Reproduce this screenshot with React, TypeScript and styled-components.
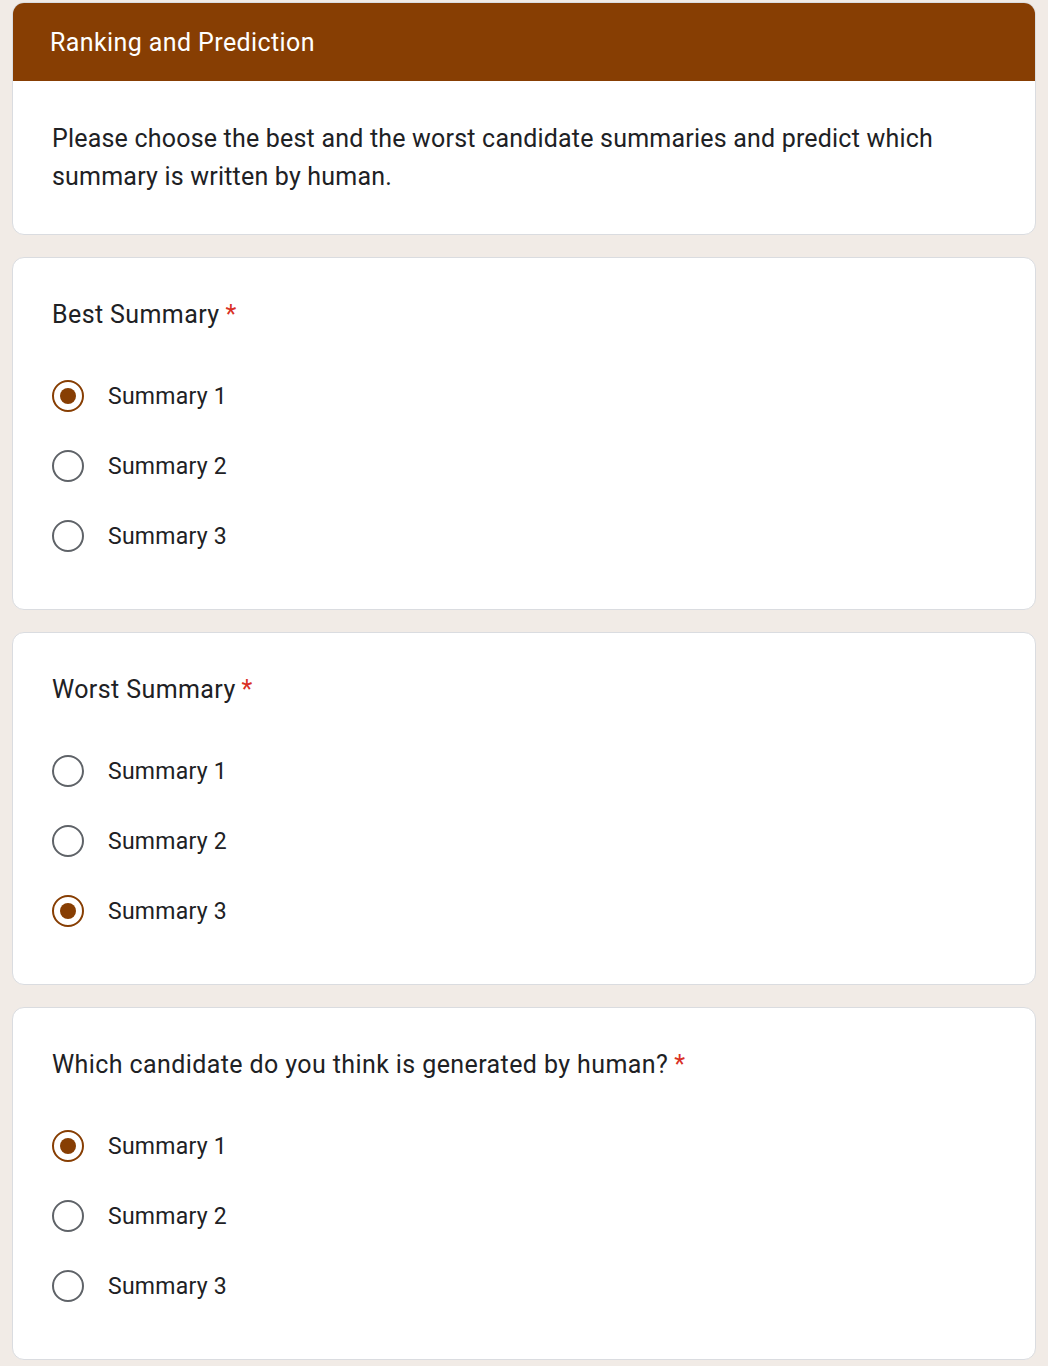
import React, { useState } from "react";
import styled, { createGlobalStyle } from "styled-components";

const GlobalStyle = createGlobalStyle`
  html, body {
    margin: 0;
    padding: 0;
    background: #f1ebe6;
    font-family: Roboto, "Liberation Sans", Arial, sans-serif;
  }
`;

const Page = styled.div`
  display: flex;
  flex-direction: column;
  gap: 22px;
  padding: 2px 12px 6px 12px;
`;

const Card = styled.div`
  background: #fff;
  border: 1px solid #dadce0;
  border-radius: 12px;
  overflow: hidden;
`;

const Header = styled.div`
  background: #873e03;
  color: #fff;
  height: 78px;
  display: flex;
  align-items: center;
  padding: 0 37px;
  font-size: 25px;
  letter-spacing: 0.4px;
`;

const Description = styled.p`
  margin: 0;
  padding: 39px 39px 38px;
  font-size: 25px;
  line-height: 38px;
  color: #202124;
  letter-spacing: 0.2px;
`;

const Question = styled.div`
  padding: 40px 39px 38px;
`;

const Title = styled.div`
  font-size: 25px;
  line-height: 34px;
  color: #202124;
  letter-spacing: 0.4px;
  margin-bottom: 29px;
`;

const Star = styled.span`
  color: #d93025;
  margin-left: 6px;
`;

const Options = styled.div`
  display: flex;
  flex-direction: column;
`;

const Option = styled.label`
  display: flex;
  align-items: center;
  gap: 24px;
  height: 70px;
  cursor: pointer;
  font-size: 23px;
  color: #202124;
  letter-spacing: 0.25px;
`;

const Circle = styled.span<{ $on: boolean }>`
  width: 32px;
  height: 32px;
  box-sizing: border-box;
  border-radius: 50%;
  border: 2px solid ${(p) => (p.$on ? "#873e03" : "#5f6368")};
  display: flex;
  align-items: center;
  justify-content: center;

  &::after {
    content: "";
    width: 16px;
    height: 16px;
    border-radius: 50%;
    background: #873e03;
    display: ${(p) => (p.$on ? "block" : "none")};
  }
`;

type Q = { title: string; initial: number };

const questions: Q[] = [
  { title: "Best Summary", initial: 0 },
  { title: "Worst Summary", initial: 2 },
  { title: "Which candidate do you think is generated by human?", initial: 0 },
];

const RadioQuestion = ({ title, initial }: Q) => {
  const [picked, setPicked] = useState(initial);
  return (
    <Card>
      <Question>
        <Title>
          {title}
          <Star>*</Star>
        </Title>
        <Options>
          {[0, 1, 2].map((i) => (
            <Option key={i} onClick={() => setPicked(i)}>
              <Circle $on={picked === i} />
              Summary {i + 1}
            </Option>
          ))}
        </Options>
      </Question>
    </Card>
  );
};

const App = () => {
  return (
    <>
      <GlobalStyle />
      <Page>
        <Card>
          <Header>Ranking and Prediction</Header>
          <Description>
            Please choose the best and the worst candidate summaries and predict which
            summary is written by human.
          </Description>
        </Card>
        {questions.map((q) => (
          <RadioQuestion key={q.title} {...q} />
        ))}
      </Page>
    </>
  );
};

export default App;
